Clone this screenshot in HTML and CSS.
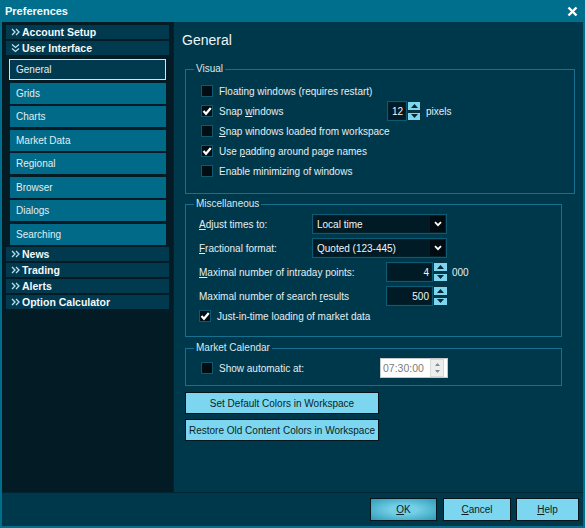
FILE: index.html
```html
<!DOCTYPE html>
<html lang="en">
  <head>
    <meta charset="UTF-8" />
    <title>Preferences</title>
    <link rel="stylesheet" href="styles.css">
  </head>
  <body>
    <div class="window">
      <div class="titlebar">
        <span class="title">Preferences</span>
        <svg class="close" width="11" height="11" viewBox="0 0 11 11">
          <path d="M1.5 1.5 L9.5 9.5 M9.5 1.5 L1.5 9.5" stroke="#fff" stroke-width="2.4" />
        </svg>
      </div>

      <div class="main">
        <nav class="sidebar">
          <div class="group-head">
            <svg width="9" height="8" viewBox="0 0 9 8"><path d="M1 1 L4 4 L1 7 M5 1 L8 4 L5 7" /></svg>
            Account Setup
          </div>
          <div class="group-head">
            <svg width="9" height="10" viewBox="0 0 9 10"><path d="M1 1.5 L4.5 4.5 L8 1.5 M1 5.5 L4.5 8.5 L8 5.5" /></svg>
            User Interface
          </div>
          <ul class="pages">
            <li class="page selected">General</li>
            <li class="page">Grids</li>
            <li class="page">Charts</li>
            <li class="page">Market Data</li>
            <li class="page">Regional</li>
            <li class="page">Browser</li>
            <li class="page">Dialogs</li>
            <li class="page">Searching</li>
          </ul>
          <div class="group-head">
            <svg width="9" height="8" viewBox="0 0 9 8"><path d="M1 1 L4 4 L1 7 M5 1 L8 4 L5 7" /></svg>
            News
          </div>
          <div class="group-head">
            <svg width="9" height="8" viewBox="0 0 9 8"><path d="M1 1 L4 4 L1 7 M5 1 L8 4 L5 7" /></svg>
            Trading
          </div>
          <div class="group-head">
            <svg width="9" height="8" viewBox="0 0 9 8"><path d="M1 1 L4 4 L1 7 M5 1 L8 4 L5 7" /></svg>
            Alerts
          </div>
          <div class="group-head">
            <svg width="9" height="8" viewBox="0 0 9 8"><path d="M1 1 L4 4 L1 7 M5 1 L8 4 L5 7" /></svg>
            Option Calculator
          </div>
        </nav>

        <section class="content">
          <h1>General</h1>

          <fieldset class="group visual">
            <legend>Visual</legend>
            <div class="row">
              <span class="check"></span>
              <span>Floating windows (requires restart)</span>
            </div>
            <div class="row">
              <div class="snap-label">
                <span class="check on"><svg width="10" height="10" viewBox="0 0 10 10"><path d="M1.5 5 L4 7.8 L8.8 2" /></svg></span>
                <span>Snap <u>w</u>indows</span>
              </div>
              <span class="number small">12</span>
              <span class="spin">
                <span class="spin-btn"><svg width="7" height="4" viewBox="0 0 7 4"><path d="M0 4 L3.5 0 L7 4 Z" /></svg></span>
                <span class="spin-btn"><svg width="7" height="4" viewBox="0 0 7 4"><path d="M0 0 L3.5 4 L7 0 Z" /></svg></span>
              </span>
              <span class="unit">pixels</span>
            </div>
            <div class="row">
              <span class="check"></span>
              <span><u>S</u>nap windows loaded from workspace</span>
            </div>
            <div class="row">
              <span class="check on"><svg width="10" height="10" viewBox="0 0 10 10"><path d="M1.5 5 L4 7.8 L8.8 2" /></svg></span>
              <span>Use <u>p</u>adding around page names</span>
            </div>
            <div class="row">
              <span class="check"></span>
              <span>Enable minimizing of windows</span>
            </div>
          </fieldset>

          <fieldset class="group misc">
            <legend>Miscellaneous</legend>
            <div class="row">
              <span class="label short"><u>A</u>djust times to:</span>
              <span class="select">
                <span class="select-text">Local time</span>
                <span class="select-arrow"><svg width="8" height="6" viewBox="0 0 8 6"><path d="M1 1.2 L4 4.2 L7 1.2" /></svg></span>
              </span>
            </div>
            <div class="row">
              <span class="label short"><u>F</u>ractional format:</span>
              <span class="select">
                <span class="select-text">Quoted (123-445)</span>
                <span class="select-arrow"><svg width="8" height="6" viewBox="0 0 8 6"><path d="M1 1.2 L4 4.2 L7 1.2" /></svg></span>
              </span>
            </div>
            <div class="row">
              <span class="label long"><u>M</u>aximal number of intraday points:</span>
              <span class="number wide">4</span>
              <span class="spin">
                <span class="spin-btn"><svg width="7" height="4" viewBox="0 0 7 4"><path d="M0 4 L3.5 0 L7 4 Z" /></svg></span>
                <span class="spin-btn"><svg width="7" height="4" viewBox="0 0 7 4"><path d="M0 0 L3.5 4 L7 0 Z" /></svg></span>
              </span>
              <span class="unit">000</span>
            </div>
            <div class="row last">
              <span class="label long">Maximal number of search <u>r</u>esults</span>
              <span class="number wide">500</span>
              <span class="spin">
                <span class="spin-btn"><svg width="7" height="4" viewBox="0 0 7 4"><path d="M0 4 L3.5 0 L7 4 Z" /></svg></span>
                <span class="spin-btn"><svg width="7" height="4" viewBox="0 0 7 4"><path d="M0 0 L3.5 4 L7 0 Z" /></svg></span>
              </span>
            </div>
            <div class="row">
              <span class="check on"><svg width="10" height="10" viewBox="0 0 10 10"><path d="M1.5 5 L4 7.8 L8.8 2" /></svg></span>
              <span>Just-in-time loading of market data</span>
            </div>
          </fieldset>

          <fieldset class="group calendar">
            <legend>Market Calendar</legend>
            <div class="row">
              <div class="time-label">
                <span class="check"></span>
                <span>Show automatic at:</span>
              </div>
              <span class="time-input">
                <span>07:30:00</span>
                <span class="time-spin">
                  <svg width="5" height="3" viewBox="0 0 5 3"><path d="M0 3 L2.5 0 L5 3 Z" /></svg>
                  <svg width="5" height="3" viewBox="0 0 5 3"><path d="M0 0 L2.5 3 L5 0 Z" /></svg>
                </span>
              </span>
            </div>
          </fieldset>

          <button class="wide-btn">Set Default Colors in Workspace</button>
          <button class="wide-btn">Restore Old Content Colors in Workspace</button>
        </section>
      </div>

      <div class="footer">
        <button class="btn ok"><u>O</u>K</button>
        <button class="btn cancel"><u>C</u>ancel</button>
        <button class="btn help"><u>H</u>elp</button>
      </div>
    </div>
  </body>
</html>
```

FILE: styles.css
```css
body {
  margin: 0;
  font-family: "Liberation Sans", Arial, sans-serif;
  font-size: 10px;
  color: #e4eef2;
  background: #00384b;
}

.window {
  width: 585px;
  height: 528px;
  box-sizing: border-box;
  border: 2px solid #006f8d;
  border-top: 0;
  display: flex;
  flex-direction: column;
  background: #00384b;
}

.titlebar {
  height: 22px;
  flex-shrink: 0;
  display: flex;
  align-items: center;
  justify-content: space-between;
  padding: 0 5px 0 3px;
  background: #006f8d;
}

.title {
  font-size: 11px;
  font-weight: bold;
  color: #f4f8fa;
}

.main {
  height: 470px;
  display: flex;
}

/* left navigation */
.sidebar {
  width: 171px;
  flex-shrink: 0;
  padding-top: 3px;
  box-sizing: border-box;
  background: #031b25;
}

.group-head {
  height: 14px;
  margin: 0 4px 2px 4px;
  padding-left: 5px;
  display: flex;
  align-items: center;
  gap: 2px;
  background: #013a4f;
  color: #f4f8fa;
  font-size: 10.5px;
  font-weight: bold;
}

.group-head svg path {
  fill: none;
  stroke: #b9e2f0;
  stroke-width: 1.3;
}

.pages {
  list-style: none;
  margin: 4px 0 0 0;
  padding: 0;
}

.page {
  height: 21px;
  line-height: 21px;
  margin: 0 7px 2.5px 8px;
  padding-left: 6px;
  box-sizing: border-box;
  background: #006a88;
  color: #e2eef2;
}

.page.selected {
  margin-left: 7px;
  padding-left: 6px;
  line-height: 19px;
  border: 1px solid #d2e4ea;
  background: #013a4f;
}

/* right pane */
.content {
  flex: 1;
  padding: 10px 0 0 11px;
  border-left: 1px solid #02222e;
}

h1 {
  margin: 0;
  font-size: 14px;
  font-weight: normal;
  line-height: 16px;
  color: #eef4f6;
  margin-left: -3px;
}

.group {
  margin: 4px 0 0 0;
  padding: 4px 0 10px 8px;
  border: 1px solid #17708e;
  box-sizing: border-box;
}

.group legend {
  padding: 0 2px;
  line-height: 12px;
  color: #dce8ec;
}

.visual {
  width: 390px;
  margin-top: 15px;
  padding-top: 6px;
  padding-bottom: 12px;
}

.misc {
  width: 377px;
}

.calendar {
  width: 377px;
  margin-top: 5px;
  padding-bottom: 7px;
}

.row {
  height: 20px;
  display: flex;
  align-items: center;
}

.visual .row,
.calendar .row {
  margin-left: 7px;
}

.misc .row {
  margin-left: 5px;
  margin-bottom: 4px;
}

.misc .row.last,
.misc .row:last-child {
  margin-bottom: 0;
}

.check {
  width: 12px;
  height: 12px;
  box-sizing: border-box;
  margin-right: 6px;
  border: 1px solid #0f5870;
  background: #000d13;
  display: flex;
  align-items: center;
  justify-content: center;
  flex-shrink: 0;
}

.check path {
  fill: none;
  stroke: #fff;
  stroke-width: 2.2;
}

.snap-label {
  width: 186px;
  display: flex;
  align-items: center;
}

.time-label {
  width: 179px;
  display: flex;
  align-items: center;
}

.label.short {
  width: 113px;
}

.label.long {
  width: 187px;
}

/* inputs */
.number,
.select {
  height: 20px;
  box-sizing: border-box;
  border: 1px solid #0d5a72;
  box-shadow: inset 0 0 0 1px #00222e;
  background: #001b25;
  color: #f2f6f8;
  display: flex;
  align-items: center;
}

.number {
  justify-content: flex-end;
  padding-right: 3px;
}

.number.small {
  width: 20px;
}

.number.wide {
  width: 47px;
}

.spin {
  width: 14px;
  height: 20px;
  display: flex;
  flex-direction: column;
  gap: 1px;
  margin-right: 5px;
}

.spin-btn {
  flex: 1;
  display: flex;
  align-items: center;
  justify-content: center;
  border: 1px solid #0b3442;
  background: #7dd6ef;
}

.spin-btn path {
  fill: #0a2630;
}

.misc .spin {
  width: 15px;
  margin-right: 4px;
}

.select {
  width: 135px;
  justify-content: space-between;
}

.select-text {
  padding-left: 4px;
}

.select-arrow {
  width: 15px;
  height: 16px;
  margin-right: 1px;
  display: flex;
  align-items: center;
  justify-content: center;
  background: #000c12;
}

.select-arrow path {
  fill: none;
  stroke: #fff;
  stroke-width: 1.8;
}

.time-input {
  width: 68px;
  height: 20px;
  box-sizing: border-box;
  border: 1px solid #c4c8ca;
  background: #fff;
  color: #7c7c7c;
  display: flex;
  align-items: center;
  justify-content: space-between;
  padding-left: 2px;
  font-size: 10.5px;
}

.time-spin {
  width: 12px;
  height: 16px;
  margin-right: 3px;
  background: #eceeef;
  border: 1px solid #d8dadb;
  display: flex;
  flex-direction: column;
  align-items: center;
  justify-content: space-evenly;
}

.time-spin path {
  fill: #8a8a8a;
}

/* buttons */
button {
  font-family: "Liberation Sans", Arial, sans-serif;
  font-size: 10px;
  color: #0c1e26;
  background: #7dd6ef;
  border: 1px solid #06151b;
  padding: 0;
  cursor: pointer;
}

.wide-btn {
  display: block;
  width: 194px;
  height: 22px;
  margin-top: 6px;
}

.wide-btn + .wide-btn {
  margin-top: 5px;
}

.footer {
  height: 34px;
  box-sizing: border-box;
  border-top: 1px solid #012431;
  padding: 5px 4px 0 0;
  display: flex;
  justify-content: flex-end;
  gap: 5px;
  background: #00384b;
}

.btn {
  height: 23px;
}

.ok {
  width: 67px;
  margin-right: 1px;
  background: radial-gradient(ellipse at center, #74cfe7 30%, #2e9bb7 100%);
}

.cancel {
  width: 68px;
}

.help {
  width: 63px;
}
```
